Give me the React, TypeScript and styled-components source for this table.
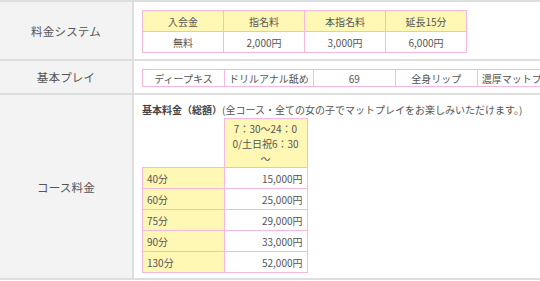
import React, { FC } from 'react';
import styled, { createGlobalStyle } from 'styled-components';

const colors = {
  text: '#555',
  rule: '#dedede',
  labelBg: '#f3f3f3',
  pink: '#f6b8de',
  yellow: '#fff7b4',
};

const font = '"Noto Sans CJK JP", "Noto Sans", sans-serif';

const GlobalStyle = createGlobalStyle`
  html, body {
    margin: 0;
    padding: 0;
    background: #fff;
    overflow: hidden;
  }
  body {
    font-family: ${font};
    color: ${colors.text};
  }
`;

const Frame = styled.div`
  width: 580px;
  border-top: 2px solid ${colors.rule};
`;

const Row = styled.div<{ $h: number }>`
  display: flex;
  height: ${(p) => p.$h}px;
  border-bottom: 2px solid ${colors.rule};
`;

const Label = styled.div`
  flex: 0 0 132px;
  display: flex;
  align-items: center;
  justify-content: center;
  background: ${colors.labelBg};
  border-right: 2px solid ${colors.rule};
  font-size: 11.5px;
  letter-spacing: 0.2px;
`;

const Body = styled.div<{ $top: number }>`
  flex: 1;
  padding: ${(p) => p.$top}px 0 0 8px;
  min-width: 0;
`;

const Grid = styled.table`
  border-collapse: collapse;
  table-layout: fixed;
  font-size: 10px;
  white-space: nowrap;
`;

const Head = styled.th`
  width: 80px;
  height: 20px;
  padding: 0;
  font-weight: normal;
  background: ${colors.yellow};
  border: 1px solid ${colors.pink};
  text-align: center;
`;

const Cell = styled.td<{ $h?: number; $align?: 'left' | 'center' | 'right' }>`
  height: ${(p) => p.$h ?? 20}px;
  padding: 0 4px;
  border: 1px solid ${colors.pink};
  text-align: ${(p) => p.$align ?? 'center'};
  overflow: visible;
`;

const PlayCell = styled(Cell)`
  width: 73px;
`;

const Duration = styled(Cell)`
  background: ${colors.yellow};
`;

const Blank = styled.td`
  width: 81px;
  padding: 0;
  border: none;
`;

const TimeHead = styled.th`
  width: 82px;
  height: 48px;
  padding: 0;
  font-weight: normal;
  line-height: 15px;
  background: ${colors.yellow};
  border: 1px solid ${colors.pink};
  text-align: center;
`;

const Caption = styled.p`
  margin: 0 0 1px;
  font-size: 10px;
  line-height: 15px;
  white-space: nowrap;
  strong {
    font-weight: 700;
    color: #444;
  }
`;

const fees = [
  { name: '入会金', price: '無料' },
  { name: '指名料', price: '2,000円' },
  { name: '本指名料', price: '3,000円' },
  { name: '延長15分', price: '6,000円' },
];

const plays = ['ディープキス', 'ドリルアナル舐め', '69', '全身リップ', '濃厚マットプレイ'];

const courses = [
  { time: '40分', price: '15,000円' },
  { time: '60分', price: '25,000円' },
  { time: '75分', price: '29,000円' },
  { time: '90分', price: '33,000円' },
  { time: '130分', price: '52,000円' },
];

const App: FC = (): JSX.Element => (
  <>
    <GlobalStyle />
    <Frame>
      <Row $h={57}>
        <Label>料金システム</Label>
        <Body $top={8}>
          <Grid>
            <thead>
              <tr>
                {fees.map((f) => (
                  <Head key={f.name}>{f.name}</Head>
                ))}
              </tr>
            </thead>
            <tbody>
              <tr>
                {fees.map((f) => (
                  <Cell key={f.name}>{f.price}</Cell>
                ))}
              </tr>
            </tbody>
          </Grid>
        </Body>
      </Row>

      <Row $h={32}>
        <Label>基本プレイ</Label>
        <Body $top={8}>
          <Grid>
            <tbody>
              <tr>
                {plays.map((p) => (
                  <PlayCell key={p} $h={16}>
                    {p}
                  </PlayCell>
                ))}
              </tr>
            </tbody>
          </Grid>
        </Body>
      </Row>

      <Row $h={183}>
        <Label>コース料金</Label>
        <Body $top={7}>
          <Caption>
            <strong>基本料金（総額）</strong>(全コース・全ての女の子でマットプレイをお楽しみいただけます。)
          </Caption>
          <Grid>
            <thead>
              <tr>
                <Blank />
                <TimeHead>
                  7：30〜24：0
                  <br />
                  0/土日祝6：30
                  <br />〜
                </TimeHead>
              </tr>
            </thead>
            <tbody>
              {courses.map((c) => (
                <tr key={c.time}>
                  <Duration $align="left">{c.time}</Duration>
                  <Cell $align="right">{c.price}</Cell>
                </tr>
              ))}
            </tbody>
          </Grid>
        </Body>
      </Row>
    </Frame>
  </>
);

export default App;
